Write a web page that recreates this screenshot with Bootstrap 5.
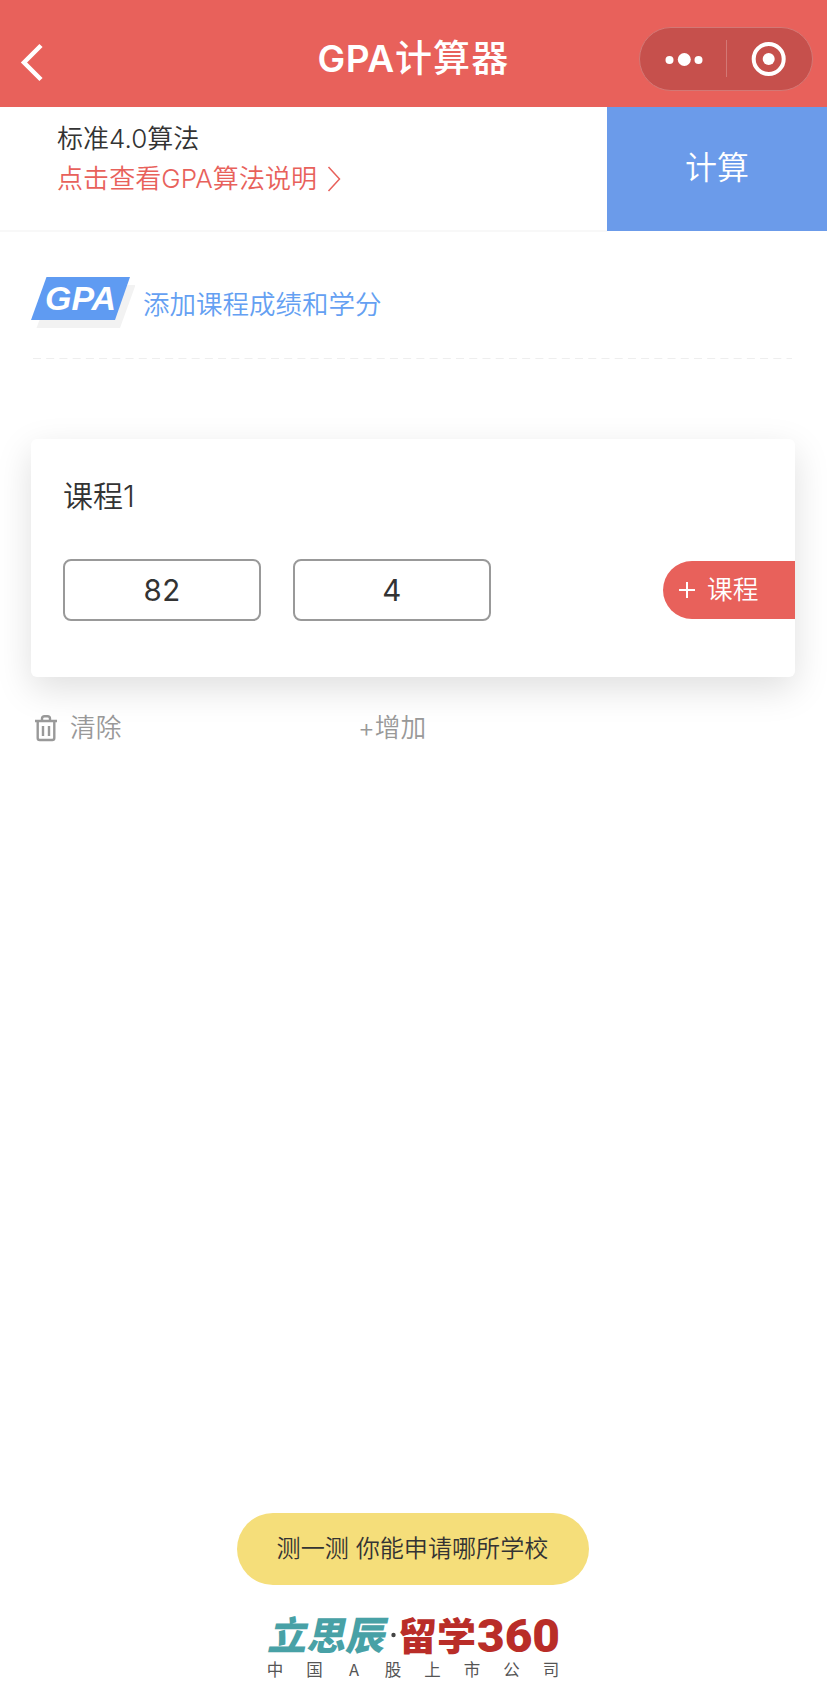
<!DOCTYPE html>
<html lang="zh-CN">
<head>
<meta charset="utf-8">
<meta name="viewport" content="width=device-width, initial-scale=1">
<title>GPA计算器</title>
<link href="https://cdn.jsdelivr.net/npm/bootstrap@5.3.0/dist/css/bootstrap.min.css" rel="stylesheet">
<style>
  :root { --coral: #e8615b; --sky: #6b9bea; --ink: #333; --muted: #999; }
  body { font-family: Inter, "Noto Sans CJK SC", sans-serif; color: var(--ink); background: #fff; font-weight: 350; line-height: 40px; font-size: 26px; }
  svg { display: block; flex: none; }
  .btn { font-weight: 350; }
  .topbar { height: 107px; background: var(--coral); padding-top: 9px; }
  .topbar h1 { font-size: 37px; font-weight: 500; line-height: 50px; letter-spacing: 1.2px; padding-top: 2px; }
  .topbar h1 span { font-weight: 600; letter-spacing: .6px; }
  .side { flex: 1 1 0; }
  .capsule { width: 174px; height: 64px; background: #c6504c; border: 1px solid #d37875; margin: 1px 14px 0 0; }
  .method { height: 124px; }
  .method-info { padding: 12px 0 0 57px; box-shadow: inset 0 -1px #f8f8f8, 0 1px #f8f8f8; }
  .method-info a { letter-spacing: .08px; }
  .calc { width: 220px; font-size: 32px; background: var(--sky); border-radius: 0; padding-bottom: 9px; }
  .coral { color: var(--coral); }
  .section-head { padding: 46px 0 0 31px; gap: 8px; height: 127px; }
  .section-head h2 { font-size: 26.5px; line-height: 40px; font-weight: 350; color: #64a0f2; padding-top: 7px; }
  .course { margin: 79px 32px 0 31px; height: 238px; border: 0; border-radius: 6px; box-shadow: 0 12px 36px rgba(0,0,0,.13); }
  .course h3 { font-size: 30px; line-height: 40px; font-weight: 350; margin: 37px 0 0 32px; }
  .fields { margin: 43px 0 0 32px; gap: 32px; }
  .score { width: 198px; height: 62px; border: 2px solid #999; border-radius: 8px; font-size: 29.5px; font-weight: 400; color: var(--ink); letter-spacing: .5px; padding: 0; }
  .add-course { width: 132px; height: 58px; background: var(--coral); border-radius: 29px 0 0 29px; padding: 0 0 0 15px; gap: 12px; font-size: 25.7px; }
  .tools { margin: 31px 0 0 35px; color: var(--muted); font-size: 25.7px; }
  .tool-clear { width: 323px; gap: 13px; }
  .quiz { width: 352px; height: 72px; background: #f5de7a; font-size: 24.1px; color: var(--ink); margin-right: 2px; }
  .footer-block { padding-bottom: 8px; }
  .brand { margin: 26px 0 0 1px; overflow: visible; }
</style>
</head>
<body class="d-flex flex-column min-vh-100">
<header class="topbar d-flex align-items-center text-white">
  <div class="side">
    <svg width="34" height="44" viewBox="0 0 34 44" class="mt-2 ms-3" fill="none" stroke="#fff" stroke-width="4.500"><path d="M25 5.500 8 22.500 25 39.500"/></svg>
  </div>
  <h1 class="m-0"><span>GPA</span>计算器</h1>
  <div class="side d-flex justify-content-end">
    <div class="capsule rounded-pill">
      <svg width="172" height="62" viewBox="0 0 172 62" fill="#fff">
        <circle cx="29.500" cy="32" r="4"/><circle cx="44.300" cy="31.500" r="6.500"/><circle cx="58.500" cy="32" r="4"/>
        <path d="M86.500 12v37" stroke="#d37875"/>
        <circle cx="128.700" cy="31" r="15" fill="none" stroke="#fff" stroke-width="4"/><circle cx="128.700" cy="31" r="6"/>
      </svg>
    </div>
  </div>
</header>
<section class="method d-flex">
  <div class="method-info flex-grow-1">
    <div>标准4.0算法</div>
    <a class="coral text-decoration-none d-flex align-items-center" href="#">点击查看GPA算法说明
      <svg class="ms-2" width="20" height="28" viewBox="0 0 20 28" fill="none" stroke="#e8615b" stroke-width="1.500"><path d="m3.500 2 11 12-11 12"/></svg>
    </a>
  </div>
  <button class="btn calc text-white">计算</button>
</section>
<section class="section-head d-flex">
  <svg width="104" height="52" viewBox="0 0 104 52">
    <path d="M21.500 8h83L89 51H5.500z" fill="#f2f2f2"/><path d="M15.500 0H99L84 43H0z" fill="#5f9bf2"/>
    <text x="14" y="33" fill="#fff" font-family="Liberation Sans, sans-serif" font-size="34" font-weight="700" font-style="italic" textLength="71" lengthAdjust="spacingAndGlyphs">GPA</text>
  </svg>
  <h2 class="m-0">添加课程成绩和学分</h2>
</section>
<svg width="827" height="2" stroke="#eee" stroke-width="1" stroke-dasharray="8 5.220"><path d="M33 .5H792"/></svg>
<section class="card course">
  <h3>课程1</h3>
  <div class="fields d-flex align-items-center">
    <input class="form-control score text-center" value="82" aria-label="成绩">
    <input class="form-control score text-center" value="4" aria-label="学分">
    <button class="btn add-course text-white ms-auto d-flex align-items-center">
      <svg width="16" height="16" stroke="#fff" stroke-width="2"><path d="M0 8h16M8 0v16"/></svg>课程
    </button>
  </div>
</section>
<div class="tools d-flex">
  <div class="tool-clear d-flex align-items-center">
    <svg width="22" height="27" viewBox="0 0 22 27" fill="none" stroke="#999" stroke-width="2.400"><path d="M0 6h22M7 6V3.500Q7 1.200 9.500 1.200h3Q15 1.200 15 3.500V6M2.700 6v17q0 2 2 2h12.600q2 0 2-2V6M8 11v10M14 11v10"/></svg>
    清除
  </div>
  <div>+增加</div>
</div>
<footer class="footer-block mt-auto d-flex flex-column align-items-center">
  <button class="btn quiz rounded-pill p-0">测一测 你能申请哪所学校</button>
  <svg class="brand" width="294" height="74" viewBox="0 -4 294 74" font-family="'Noto Sans CJK SC', sans-serif" font-weight="900">
    <g fill="#48a1a6"><text transform="translate(0 35) skewX(-12)" font-size="39" textLength="117" lengthAdjust="spacingAndGlyphs">立思辰</text></g>
    <circle cx="126.500" cy="20" r="2.200" fill="#444"/>
    <g fill="#b92d28"><text x="131" y="35" font-size="38" textLength="78" lengthAdjust="spacingAndGlyphs">留学</text>
    <text x="210" y="37" font-family="Roboto, sans-serif" font-size="46" font-weight="900" textLength="83" lengthAdjust="spacingAndGlyphs">360</text></g>
    <g fill="#555" font-size="16.500" font-weight="400" text-anchor="middle"><text x="8" y="61">中</text><text x="47.500" y="61">国</text><text x="87" y="61">A</text><text x="126" y="61">股</text><text x="165.500" y="61">上</text><text x="205" y="61">市</text><text x="244.500" y="61">公</text><text x="284" y="61">司</text></g>
  </svg>
</footer>
<script src="https://cdn.jsdelivr.net/npm/bootstrap@5.3.0/dist/js/bootstrap.bundle.min.js"></script>
</body>
</html>
